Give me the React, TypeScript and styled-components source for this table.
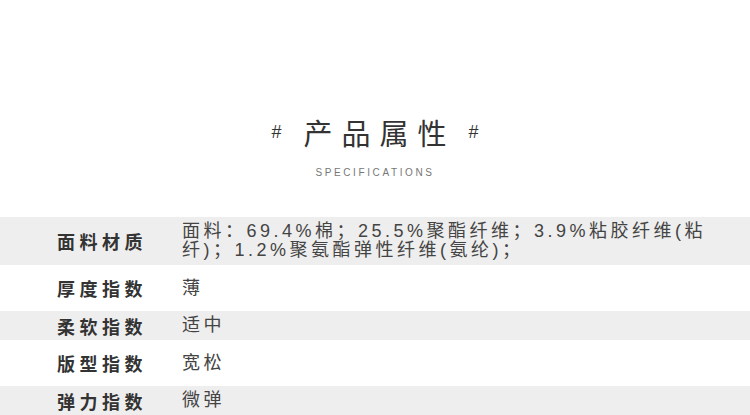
import React from "react";
import styled, { createGlobalStyle } from "styled-components";

const GlobalStyle = createGlobalStyle`
  html, body {
    margin: 0;
    padding: 0;
    background: #ffffff;
  }
  body {
    font-family: "Liberation Sans", "Noto Sans CJK SC", sans-serif;
  }
`;

const Page = styled.div`
  width: 750px;
  height: 415px;
  overflow: hidden;
  background: #fff;
  display: flex;
  flex-direction: column;
`;

const Header = styled.div`
  display: flex;
  flex-direction: column;
  align-items: center;
  padding-top: 113px;
`;

const Title = styled.h1`
  margin: 0;
  display: flex;
  align-items: center;
  gap: 22px;
  font-family: "Noto Sans CJK SC", sans-serif;
  font-weight: 400;
  font-size: 29px;
  line-height: 38px;
  color: #333;
`;

const TitleText = styled.span`
  letter-spacing: 9px;
  margin-right: -9px;
`;

const Hash = styled.span`
  font-family: "Liberation Sans", sans-serif;
  font-size: 18px;
  color: #333;
`;

const Subtitle = styled.div`
  margin-top: 16px;
  font-family: "Liberation Sans", sans-serif;
  font-size: 10px;
  letter-spacing: 2.6px;
  color: #777;
`;

const Table = styled.div`
  margin-top: 39px;
  display: flex;
  flex-direction: column;
  gap: 8.5px;
`;

const Row = styled.div<{ $shaded: boolean }>`
  display: grid;
  grid-template-columns: 182px 1fr;
  align-items: center;
  min-height: 29px;
  background: ${({ $shaded }) => ($shaded ? "#eeeeee" : "transparent")};
`;

const Label = styled.div`
  padding-left: 57px;
  font-family: "Noto Sans CJK SC", sans-serif;
  font-weight: 700;
  font-size: 18px;
  letter-spacing: 4.5px;
  color: #333;
`;

const Value = styled.div`
  padding: 5px 30px 5px 0;
  font-family: "Liberation Sans", "Noto Sans CJK SC", sans-serif;
  font-size: 18px;
  line-height: 19px;
  letter-spacing: 3.5px;
  color: #444;
`;

const specs = [
  {
    label: "面料材质",
    value:
      "面料：69.4%棉；25.5%聚酯纤维；3.9%粘胶纤维(粘纤)；1.2%聚氨酯弹性纤维(氨纶)；",
  },
  { label: "厚度指数", value: "薄" },
  { label: "柔软指数", value: "适中" },
  { label: "版型指数", value: "宽松" },
  { label: "弹力指数", value: "微弹" },
];

const App = () => {
  return (
    <Page>
      <GlobalStyle />
      <Header>
        <Title>
          <Hash>#</Hash>
          <TitleText>产品属性</TitleText>
          <Hash>#</Hash>
        </Title>
        <Subtitle>SPECIFICATIONS</Subtitle>
      </Header>
      <Table>
        {specs.map((s, i) => (
          <Row key={s.label} $shaded={i % 2 === 0}>
            <Label>{s.label}</Label>
            <Value>{s.value}</Value>
          </Row>
        ))}
      </Table>
    </Page>
  );
};

export default App;
